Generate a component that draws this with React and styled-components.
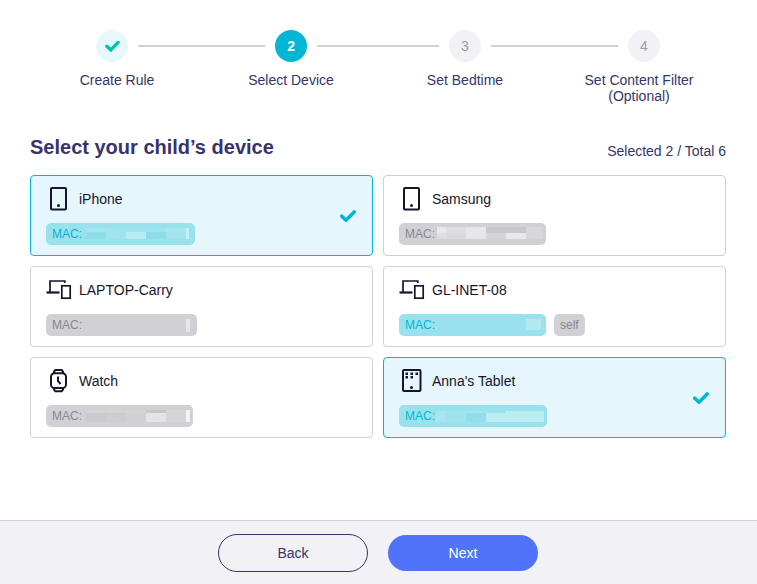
import React, { useState } from "react";
import styled, { createGlobalStyle } from "styled-components";

const steps = ["Create Rule", "Select Device", "Set Bedtime", "Set Content Filter (Optional)"];
const currentStep = 1;

// mask: blocks that hide the address, as [x, y, width, height, color]
const initialDevices = [
  {
    name: "iPhone",
    icon: "phone",
    selected: true,
    maskWidth: 113,
    mask: [
      [4, 5, 20, 4, "#a4e5ee"],
      [24, 5, 60, 4, "#a0e4ed"],
      [84, 5, 20, 4, "#a6e6ee"],
      [4, 9, 20, 7, "#8edde9"],
      [24, 9, 20, 7, "#a0e4ed"],
      [44, 9, 20, 7, "#b8ecf3"],
      [64, 9, 20, 7, "#8cdde9"],
      [84, 9, 20, 7, "#a0e4ed"],
      [104, 5, 3, 11, "#c0eef4"],
    ],
  },
  {
    name: "Samsung",
    icon: "phone",
    maskWidth: 111,
    mask: [
      [2, 4, 9, 6, "#e8e8ea"],
      [11, 4, 20, 6, "#dedee0"],
      [31, 4, 20, 12, "#e7e7e9"],
      [51, 4, 40, 6, "#c9c9cb"],
      [2, 10, 9, 6, "#dedee0"],
      [11, 10, 20, 6, "#d9d9db"],
      [51, 10, 20, 6, "#d5d5d7"],
      [71, 10, 20, 6, "#e8e8ea"],
      [91, 4, 17, 12, "#d7d7d9"],
    ],
  },
  {
    name: "LAPTOP-Carry",
    icon: "laptop",
    maskWidth: 115,
    mask: [[104, 5, 4, 13, "#e6e6e8"]],
  },
  {
    name: "GL-INET-08",
    icon: "laptop",
    self: true,
    maskWidth: 111,
    mask: [[91, 5, 15, 11, "#b0e9f0"]],
  },
  {
    name: "Watch",
    icon: "watch",
    maskWidth: 111,
    mask: [
      [4, 5, 60, 3, "#d4d4d6"],
      [4, 8, 20, 9, "#cacacc"],
      [24, 8, 20, 9, "#cdcdd0"],
      [64, 5, 20, 3, "#c6c6c8"],
      [64, 8, 20, 9, "#e4e4e6"],
      [84, 5, 20, 12, "#d5d5d7"],
      [104, 5, 4, 12, "#f4f4f5"],
    ],
  },
  {
    name: "Anna's Tablet",
    icon: "tablet",
    selected: true,
    maskWidth: 112,
    mask: [
      [1, 6, 10, 11, "#a8e6ee"],
      [11, 6, 20, 11, "#a0e3ed"],
      [31, 6, 20, 2, "#a4e5ee"],
      [31, 8, 20, 9, "#90dee9"],
      [51, 8, 20, 9, "#bcedf3"],
      [71, 6, 38, 11, "#bcedf3"],
    ],
  },
];

const DeviceIcon = ({ type }) => (
  <Icon viewBox="0 0 25 25" aria-hidden="true">
    {type === "phone" && (
      <>
        <rect x="5" y="2" width="15" height="21.5" rx="1" />
        <circle className="dot" cx="12.5" cy="19.5" r="1.5" />
      </>
    )}
    {type === "tablet" && (
      <>
        <rect x="4" y="2" width="17.5" height="21" rx="1" />
        <path
          className="dot"
          d="M6.500 4.500H9V7H6.500zM11.500 4.500H14V7h-2.500zM16.500 4.500H19V7h-2.500zM6.500 8H9v2.500H6.500zM11.500 8H14v2.500h-2.500z"
        />
        <circle className="dot" cx="12.5" cy="19.5" r="1.5" />
      </>
    )}
    {type === "laptop" && (
      <>
        <path strokeWidth="1.7" d="M18.800 6V4H4v11" />
        <path strokeWidth="2.2" d="M.5 15.500h13" />
        <rect strokeWidth="1.7" x="15.800" y="8.800" width="8.400" height="12.400" />
      </>
    )}
    {type === "watch" && (
      <>
        <rect x="5" y="5.200" width="15" height="14.800" rx="3.600" />
        <path d="M8 5.200V3.600L9.400 2h6.200L17 3.600v1.600M8 20v1.600l1.400 1.600h6.200l1.400-1.600V20" />
        <path d="M12 8.500v4.500l2.500 3" />
      </>
    )}
  </Icon>
);

const App = () => {
  const [devices, setDevices] = useState(initialDevices);
  const selectedCount = devices.filter((d) => d.selected).length;

  const toggle = (name) =>
    setDevices(devices.map((d) => (d.name === name ? { ...d, selected: !d.selected } : d)));

  return (
    <Page>
      <GlobalStyle />
      <Content>
        <Track>
          {steps.map((step, i) => (
            <React.Fragment key={step}>
              {i > 0 && <Line $grow={i === 2 ? 24 : 25} />}
              <Circle $done={i < currentStep} $active={i === currentStep}>
                {i < currentStep ? (
                  <Check viewBox="0 0 16 12" $small>
                    <path d="M2 6.200L6.200 10.200L14 2.200" />
                  </Check>
                ) : (
                  i + 1
                )}
              </Circle>
            </React.Fragment>
          ))}
        </Track>
        <Labels>
          {steps.map((step) => (
            <li key={step}>{step}</li>
          ))}
        </Labels>

        <Heading>
          <h1>Select your child’s device</h1>
          <p>
            Selected {selectedCount} / Total {devices.length}
          </p>
        </Heading>

        <Devices>
          {devices.map((device) => (
            <Card key={device.name} $selected={device.selected}>
              <Details>
                <Name>
                  <DeviceIcon type={device.icon} />
                  {device.name}
                </Name>
                <Tags>
                  <Tag $cyan={device.selected || device.self} $mac>
                    MAC:
                    <svg width={device.maskWidth} height="22" shapeRendering="crispEdges" aria-hidden="true">
                      {device.mask.map(([x, y, width, height, fill]) => (
                        <rect key={`${x}-${y}`} x={x} y={y} width={width} height={height} fill={fill} />
                      ))}
                    </svg>
                  </Tag>
                  {device.self && <Tag>self</Tag>}
                </Tags>
              </Details>
              <Toggle>
                <input
                  type="checkbox"
                  checked={!!device.selected}
                  onChange={() => toggle(device.name)}
                />
                {device.selected && (
                  <Check viewBox="0 0 16 12">
                    <path d="M1.800 6.200L6 10.200L14.200 2" />
                  </Check>
                )}
              </Toggle>
            </Card>
          ))}
        </Devices>
      </Content>

      <Footer>
        <Button type="button">Back</Button>
        <Button type="button" $primary>
          Next
        </Button>
      </Footer>
    </Page>
  );
};

const GlobalStyle = createGlobalStyle`
  * {
    box-sizing: border-box;
    margin: 0;
    padding: 0;
  }
  body {
    font-family: "Liberation Sans", Arial, sans-serif;
    font-size: 14px;
    line-height: 16px;
    color: #36346b;
    background: white;
  }
`;

const Page = styled.div`
  min-height: 100vh;
  display: flex;
  flex-direction: column;
`;

const Content = styled.main`
  flex: 1;
  padding: 30px 31px 30px 30px;
`;

const Track = styled.div`
  display: flex;
  align-items: center;
  gap: 10px;
  padding: 0 calc(12.5% - 21px);
`;

const Circle = styled.div`
  flex: none;
  display: flex;
  align-items: center;
  justify-content: center;
  width: 32px;
  height: 32px;
  border-radius: 50%;
  font-weight: ${(p) => (p.$active ? "bold" : "normal")};
  color: ${(p) => (p.$done ? "#00c4b3" : p.$active ? "white" : "#9c9ca3")};
  background: ${(p) => (p.$done ? "#e6f9f8" : p.$active ? "#03b6d3" : "#f2f1f6")};
`;

const Line = styled.div`
  flex: ${(p) => p.$grow};
  height: 2px;
  background: #d0d0d5;
`;

const Check = styled.svg`
  width: ${(p) => (p.$small ? 15 : 16)}px;
  height: 12px;
  fill: none;
  stroke: ${(p) => (p.$small ? "#00c4b3" : "#03b6d3")};
  stroke-width: 3.6;
  stroke-linecap: round;
`;

const Labels = styled.ol`
  display: grid;
  grid-template-columns: repeat(4, 1fr);
  margin-top: 10px;
  list-style: none;
  text-align: center;
  li {
    padding: 0 30px;
  }
`;

const Heading = styled.div`
  display: flex;
  align-items: flex-end;
  justify-content: space-between;
  margin: 31px 0 16px;
  h1 {
    font-size: 20px;
    line-height: 24px;
  }
`;

const Devices = styled.div`
  display: grid;
  grid-template-columns: 1fr 1fr;
  gap: 10px;
`;

const Card = styled.label`
  display: flex;
  align-items: center;
  justify-content: space-between;
  padding: 10px 16px 10px 15px;
  border: 1px solid ${(p) => (p.$selected ? "#03b6d3" : "#d0d0d5")};
  border-radius: 4px;
  background: ${(p) => (p.$selected ? "#e5f7fc" : "white")};
  cursor: pointer;
`;

const Details = styled.div`
  display: flex;
  flex-direction: column;
  gap: 12px;
`;

const Name = styled.div`
  display: flex;
  align-items: center;
  gap: 8px;
  color: #16152d;
`;

const Icon = styled.svg`
  width: 25px;
  height: 25px;
  fill: none;
  stroke: #16152d;
  stroke-width: 2;
  overflow: visible;
  .dot {
    fill: #16152d;
    stroke: none;
  }
`;

const Tags = styled.div`
  display: flex;
  gap: 8px;
`;

const Tag = styled.span`
  display: flex;
  align-items: center;
  height: 22px;
  padding: ${(p) => (p.$mac ? "0 0 0 6px" : "0 6px")};
  border-radius: 5px;
  font-size: 12px;
  color: ${(p) => (p.$cyan ? "#03b6d3" : "#88888f")};
  background: ${(p) => (p.$cyan ? "#99e1ec" : "#d0d0d5")};
`;

const Toggle = styled.span`
  display: grid;
  place-items: center;
  input,
  svg {
    grid-area: 1 / 1;
  }
  input {
    appearance: none;
    width: 16px;
    height: 16px;
  }
`;

const Footer = styled.footer`
  display: flex;
  align-items: center;
  justify-content: center;
  gap: 20px;
  height: 64px;
  padding-right: 1px;
  border-top: 1px solid #d0d0d5;
  background: #f2f1f6;
`;

const Button = styled.button`
  width: 150px;
  height: ${(p) => (p.$primary ? 36 : 38)}px;
  border: ${(p) => (p.$primary ? "none" : "1px solid #36346b")};
  border-radius: 19px;
  font: inherit;
  color: ${(p) => (p.$primary ? "white" : "#36346b")};
  background: ${(p) => (p.$primary ? "#5073fa" : "transparent")};
  cursor: pointer;
`;

export default App;
